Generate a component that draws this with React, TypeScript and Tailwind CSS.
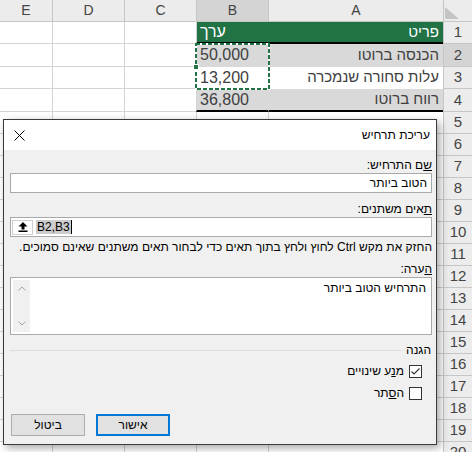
import React from "react";

type Kind = "head" | "band" | "plain" | "total" | "none";

const rows: { n: number; h: string; a: string; b: string; kind: Kind }[] = [
  { n: 1, h: "h-[22px]", a: "פריט", b: "ערך", kind: "head" },
  { n: 2, h: "h-[23px]", a: "הכנסה ברוטו", b: "50,000", kind: "band" },
  { n: 3, h: "h-[22px]", a: "עלות סחורה שנמכרה", b: "13,200", kind: "plain" },
  { n: 4, h: "h-[23px]", a: "רווח ברוטו", b: "36,800", kind: "total" },
  ...Array.from({ length: 16 }, (_, i) => ({ n: i + 5, h: "h-[22px]", a: "", b: "", kind: "none" as Kind })),
];

const aCls: Record<Kind, string> = {
  head: "bg-[#217346] text-white border-l border-l-[#217346] border-b-2 border-b-black",
  band: "bg-[#d9d9d9] text-[#404040] border-l border-l-[#d9d9d9] border-b border-b-[#d9d9d9]",
  plain: "bg-white text-[#404040] border-l border-l-[#d4d4d4] border-b border-b-white",
  total: "bg-[#d9d9d9] text-[#404040] border-l border-l-[#d9d9d9] border-b-2 border-b-black",
  none: "border-l border-b border-[#d4d4d4]",
};

const bCls: Record<Kind, string> = {
  head: "bg-[#217346] text-white border-l border-l-[#d4d4d4] border-b-2 border-b-black",
  band: "bg-[#d9d9d9] text-[#404040] border-l border-l-[#d4d4d4] border-b border-b-[#d9d9d9]",
  plain: "bg-white text-[#404040] border-l border-l-[#d4d4d4] border-b border-b-white",
  total: "bg-[#d9d9d9] text-[#404040] border-l border-l-[#d4d4d4] border-b-2 border-b-black",
  none: "border-l border-b border-[#d4d4d4]",
};

function Checkbox({ checked }: { checked?: boolean }) {
  return (
    <div className="w-[13px] h-[13px] border border-[#333] bg-white flex items-center justify-center">
      {checked && (
        <svg width="11" height="11" viewBox="0 0 11 11">
          <polyline points="1.5,5.5 4,8 9.5,2.5" fill="none" stroke="#333" strokeWidth="1.1" />
        </svg>
      )}
    </div>
  );
}

function Sheet() {
  return (
    <div className="flex flex-col">
      {/* column headers */}
      <div className="flex h-[22px] text-[14px] text-[#444]">
        <div className="w-[29px] bg-[#ececec] border-l border-b border-[#c6c6c6] flex items-end justify-end pl-[1px] pb-[2px]">
          <svg width="14" height="12" viewBox="0 0 14 12">
            <polygon points="0,0 0,12 14,12" fill="#c4c4c4" />
          </svg>
        </div>
        <div className="w-[175px] bg-[#ececec] border-l border-b border-[#c6c6c6] flex items-center justify-center">A</div>
        <div className="w-[72px] bg-[#d4d4d4] border-l border-b border-[#c6c6c6] flex items-center justify-center">B</div>
        <div className="w-[72px] bg-[#ececec] border-l border-b border-[#c6c6c6] flex items-center justify-center">C</div>
        <div className="w-[72px] bg-[#ececec] border-l border-b border-[#c6c6c6] flex items-center justify-center">D</div>
        <div className="flex-1 bg-[#ececec] border-b border-[#c6c6c6] flex items-center justify-center">E</div>
      </div>
      {rows.map((r) => (
        <div key={r.n} className={`flex ${r.h}`}>
          <div
            className={`w-[29px] border-l border-b border-[#c6c6c6] flex items-center justify-center text-[15px] text-[#444] ${
              r.n === 2 ? "bg-[#d4d4d4]" : "bg-[#ececec]"
            }`}
          >
            {r.n}
          </div>
          <div className={`w-[175px] flex items-center justify-start pr-[4px] text-[15px] ${aCls[r.kind]}`}>{r.a}</div>
          <div className={`w-[72px] flex items-center justify-end pl-[3px] text-[16px] ${bCls[r.kind]}`}>{r.b}</div>
          <div className="w-[72px] border-l border-b border-[#d4d4d4]" />
          <div className="w-[72px] border-l border-b border-[#d4d4d4]" />
          <div className="flex-1 border-b border-[#d4d4d4]" />
        </div>
      ))}
    </div>
  );
}

function Dialog() {
  return (
    <div className="absolute left-[3px] top-[119px] w-[434px] border border-[#3a3a3a] bg-[#f0f0f0] shadow-[3px_3px_8px_rgba(0,0,0,0.35)] text-[12px] text-black">
      <div className="h-[30px] bg-white flex items-center justify-between pr-[6px] pl-[10px]">
        <span>עריכת תרחיש</span>
        <svg width="11" height="11" viewBox="0 0 11 11">
          <path d="M0.5 0.5L10.5 10.5M10.5 0.5L0.5 10.5" stroke="#000" strokeWidth="1" />
        </svg>
      </div>
      <div className="flex flex-col pt-[7px] pr-[4px] pl-[6px] pb-[8px]">
        <div className="h-[16px] leading-[16px]">
          <u>ש</u>ם התרחיש:
        </div>
        <div className="h-[20px] border border-[#a9a9a9] bg-white flex items-center pr-[4px]">הטוב ביותר</div>

        <div className="h-[16px] leading-[16px] mt-[8px]">
          <u>ת</u>אים משתנים:
        </div>
        <div dir="ltr" className="h-[20px] border border-[#a9a9a9] bg-white flex items-center pl-[1px]">
          <div className="w-[21px] h-[15px] border border-[#cfcfcf] bg-white flex items-center justify-center">
            <svg width="10" height="10" viewBox="0 0 10 10">
              <polygon points="5,0 9.5,4.5 6.5,4.5 6.5,7.5 3.5,7.5 3.5,4.5 0.5,4.5" fill="#000" />
              <rect x="0.5" y="8.5" width="9" height="1.5" fill="#000" />
            </svg>
          </div>
          <span className="ml-[3px] bg-[#cccccc] leading-[14px] px-[1px]">B2,B3</span>
          <div className="w-px h-[14px] bg-black" />
        </div>

        <div className="h-[16px] leading-[16px] mt-[2px] whitespace-nowrap">
          החזק את מקש Ctrl לחוץ ולחץ בתוך תאים כדי לבחור תאים משתנים שאינם סמוכים.
        </div>

        <div className="h-[16px] leading-[16px] mt-[6px]">
          <u>ה</u>ערה:
        </div>
        <div className="h-[58px] border border-[#a9a9a9] bg-white flex">
          <div className="flex-1 pr-[5px] pt-[2px] leading-[16px]">התרחיש הטוב ביותר</div>
          <div className="w-[17px] m-[2px] bg-[#f0f0f0] flex flex-col items-center justify-between py-[6px]">
            <svg width="8" height="5" viewBox="0 0 8 5">
              <polyline points="0.5,4.5 4,1 7.5,4.5" fill="none" stroke="#a6a6a6" strokeWidth="1" />
            </svg>
            <svg width="8" height="5" viewBox="0 0 8 5">
              <polyline points="0.5,0.5 4,4 7.5,0.5" fill="none" stroke="#a6a6a6" strokeWidth="1" />
            </svg>
          </div>
        </div>

        <div className="h-[16px] mt-[7px] flex items-center gap-[5px] pr-[1px]">
          <span className="leading-[16px]">הגנה</span>
          <div className="flex-1 h-px bg-[#dcdcdc]" />
        </div>
        <div className="h-[16px] mt-[5px] flex items-center gap-[5px] pr-[10px]">
          <Checkbox checked />
          <span className="leading-[16px]">
            מ<u>נ</u>ע שינויים
          </span>
        </div>
        <div className="h-[16px] mt-[6px] flex items-center gap-[5px] pr-[10px]">
          <Checkbox />
          <span className="leading-[16px]">
            ה<u>ס</u>תר
          </span>
        </div>

        <div className="mt-[13px] flex justify-end gap-[11px] pl-[1px]">
          <div className="w-[74px] h-[22px] border-2 border-[#0078d7] bg-[#e1e1e1] flex items-center justify-center">אישור</div>
          <div className="w-[74px] h-[22px] border border-[#adadad] bg-[#e1e1e1] flex items-center justify-center">ביטול</div>
        </div>
      </div>
    </div>
  );
}

export default function App() {
  return (
    <div
      dir="rtl"
      className="relative w-[472px] h-[452px] overflow-hidden bg-white font-['Liberation_Sans','DejaVu_Sans',sans-serif]"
    >
      <Sheet />
      {/* copy selection around B2:B3 */}
      <svg className="absolute left-[195px] top-[43px]" width="75" height="47">
        <rect x="1" y="1" width="73" height="45" fill="none" stroke="#fff" strokeWidth="2" />
        <rect x="1" y="1" width="73" height="45" fill="none" stroke="#217346" strokeWidth="2" strokeDasharray="4 2" />
      </svg>
      <div className="absolute left-[193px] top-[64px] w-[6px] h-[6px] bg-[#217346] border border-white" />
      <Dialog />
    </div>
  );
}
